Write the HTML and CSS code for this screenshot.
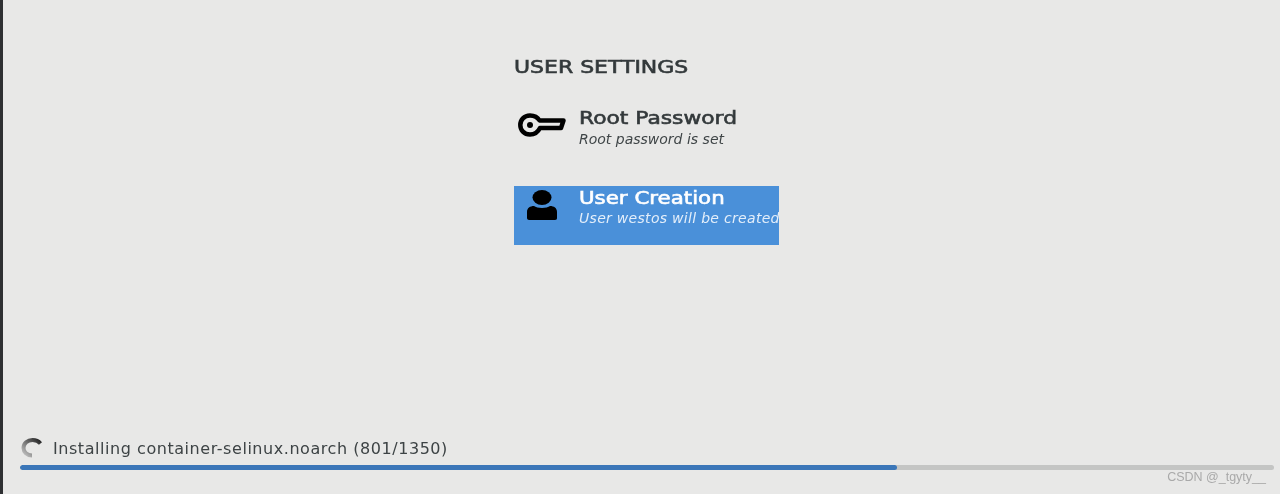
FILE: index.html
```html
<!DOCTYPE html>
<html lang="en">
<head>
<meta charset="utf-8">
<title>User Settings</title>
<link rel="stylesheet" href="styles.css">
</head>
<body>
<div class="window">
  <div class="edge"></div>
  <main class="hub">
    <section class="settings">
      <h2 class="heading">USER SETTINGS</h2>
      <div class="spoke spoke-root">
        <svg class="icon icon-key" viewBox="0 0 48 24" width="48" height="24" aria-hidden="true">
          <path d="M12 2.500C16 2.500 19.500 4 21.500 7.500H45.500L43 15H22C20 19 16 21.500 12 21.500C6 21.500 2.300 17 2.300 12C2.300 7 6 2.500 12 2.500Z" fill="none" stroke="#000" stroke-width="4.500" stroke-linejoin="round"/>
          <circle cx="12" cy="12" r="3" fill="#000"/>
        </svg>
        <div class="labels">
          <div class="title">Root Password</div>
          <div class="status">Root password is set</div>
        </div>
      </div>
      <div class="spoke spoke-user">
        <svg class="icon icon-user" viewBox="0 0 30 30" width="30" height="30" aria-hidden="true">
          <ellipse cx="15" cy="7.500" rx="9.500" ry="7.500"/>
          <path d="M0 28V22C0 18 3 16 7 16C10 18.500 20 18.500 23 16C27 16 30 18 30 22V28C30 29 29.500 30 28 30H2C1 30 0 29 0 28Z"/>
        </svg>
        <div class="labels">
          <div class="title">User Creation</div>
          <div class="status">User westos will be created</div>
        </div>
      </div>
    </section>
    <footer class="progress-area">
      <div class="progress-label">
        <svg class="spinner" viewBox="0 0 22 22" width="22" height="22" aria-hidden="true">
          <defs>
            <linearGradient id="sweep" x1="1" y1="0" x2="0" y2="1">
              <stop offset="0" stop-color="#222"/>
              <stop offset="1" stop-color="#c4c4c4"/>
            </linearGradient>
          </defs>
          <path d="M20.500 6.500C18 3.500 15 3 12.500 3C7.500 3 3.500 6.500 3.500 11C3.500 15 7 18.500 12 18.500" fill="none" stroke="url(#sweep)" stroke-width="4"/>
        </svg>
        <span>Installing container-selinux.noarch (801/1350)</span>
      </div>
      <div class="bar"><div class="bar-fill"></div></div>
    </footer>
  </main>
  <div class="watermark">CSDN @_tgyty__</div>
</div>
</body>
</html>
```

FILE: styles.css
```css
* {
  box-sizing: border-box;
}

html,
body {
  margin: 0;
  height: 100%;
}

body {
  background: #e8e8e7;
  font-family: "DejaVu Sans", "Noto Sans", sans-serif;
  overflow: hidden;
}

.window {
  position: relative;
  display: flex;
  height: 494px;
}

.edge {
  width: 3px;
  flex: none;
  background: #2e3032;
}

.hub {
  flex: 1;
  display: flex;
  flex-direction: column;
  justify-content: space-between;
}

.settings {
  width: 265px;
  margin: 56px 0 0 511px;
  filter: blur(0.45px);
}

.heading {
  margin: 0 0 27px;
  font-size: 17.500px;
  line-height: 23px;
  font-weight: 400;
  -webkit-text-stroke: 0.6px #33393b;
  color: #33393b;
  transform: scaleX(1.255);
  transform-origin: left center;
}

.spoke {
  display: flex;
  height: 59px;
  overflow: hidden;
}

.spoke-root {
  margin-bottom: 21px;
}

.spoke-user {
  background: #4a90d9;
  color: #fff;
}

.icon {
  flex: none;
}

.icon-key {
  width: 48px;
  height: 24px;
  margin: 7px 13px 0 4px;
}

.icon-user {
  width: 30px;
  height: 30px;
  margin: 4px 22px 0 13px;
}

.labels {
  white-space: nowrap;
}

.title {
  font-size: 18px;
  line-height: 22px;
  font-weight: 400;
  -webkit-text-stroke: 0.6px currentColor;
  color: #33393b;
  margin-top: 1px;
  transform: scaleX(1.21);
  transform-origin: left center;
}

.status {
  font-size: 14px;
  line-height: 20px;
  font-style: italic;
  color: #3f4547;
}

.spoke-user .title {
  color: #fff;
  transform: scaleX(1.185);
}

.spoke-user .status {
  color: #e3eefa;
  margin-top: -1px;
  letter-spacing: 0.3px;
}

.progress-area {
  padding: 0 6px 24px 17px;
}

.progress-label {
  display: flex;
  align-items: center;
  gap: 11px;
  height: 24px;
  margin-bottom: 5px;
  font-size: 16px;
  letter-spacing: 0.55px;
  color: #3d4345;
  filter: blur(0.4px);
}

.spinner {
  width: 22px;
  height: 22px;
  flex: none;
}

.bar {
  height: 5px;
  border-radius: 3px;
  background: #c4c5c4;
  overflow: hidden;
}

.bar-fill {
  width: 877px;
  height: 100%;
  background: #3b76b8;
  border-radius: 3px;
}

.watermark {
  position: absolute;
  right: 14px;
  bottom: 9px;
  font-family: "Liberation Sans", Arial, sans-serif;
  font-size: 12.500px;
  line-height: 16px;
  color: #a9a9a9;
  filter: blur(0.3px);
}
```
